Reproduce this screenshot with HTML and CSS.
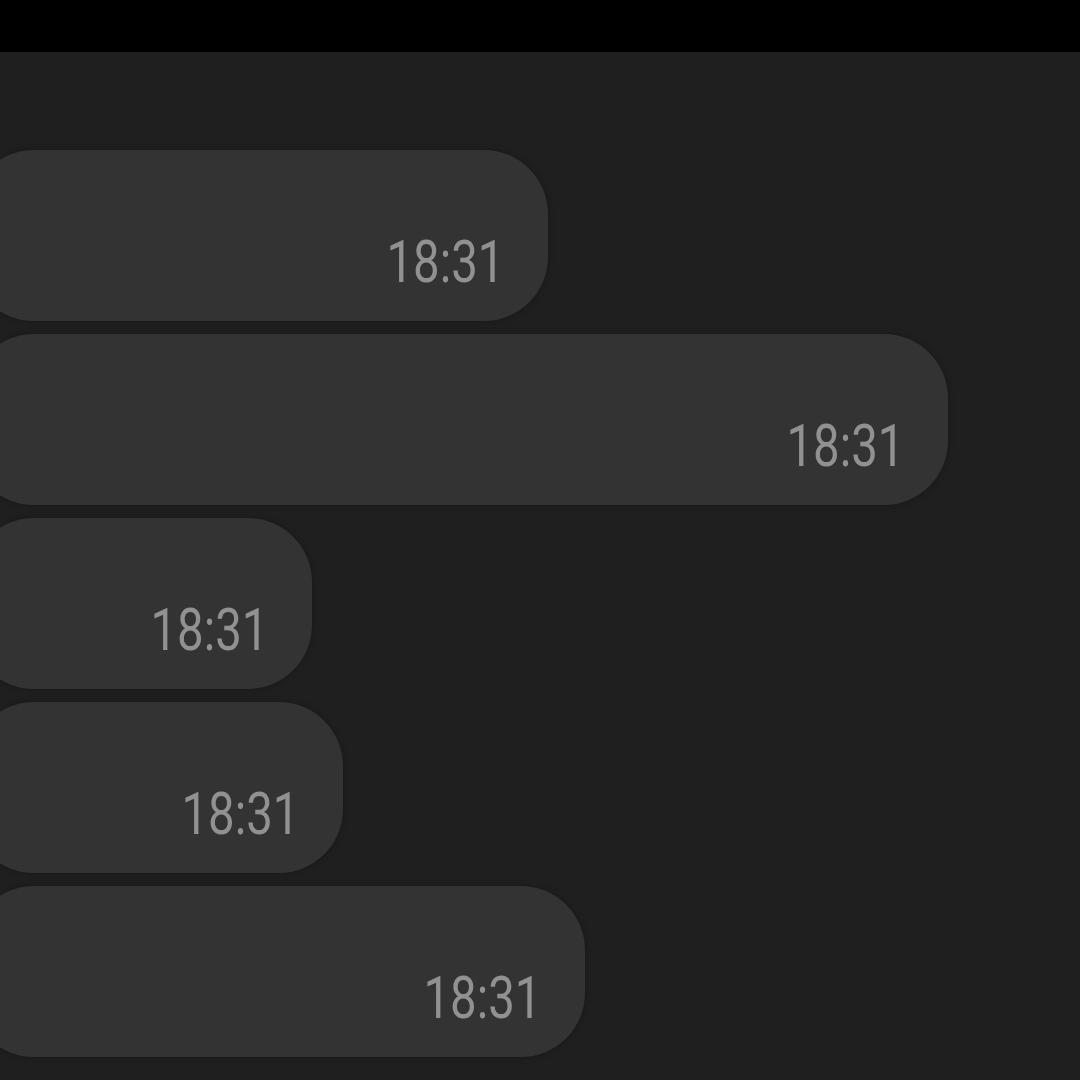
FILE: index.html
```html
<!DOCTYPE html>
<html>
<head>
<meta charset="utf-8">
<link rel="stylesheet" href="styles.css">
</head>
<body>
<div class="topbar"></div>
<div class="chat">
  <div class="bubble" style="width:578px"><span class="time">18:31</span></div>
  <div class="bubble" style="width:978px"><span class="time">18:31</span></div>
  <div class="bubble" style="width:342px"><span class="time">18:31</span></div>
  <div class="bubble" style="width:373px"><span class="time">18:31</span></div>
  <div class="bubble" style="width:615px"><span class="time">18:31</span></div>
</div>
</body>
</html>
```
FILE: styles.css
```css
html, body {
  margin: 0;
  padding: 0;
  background: #1f1f1f;
  width: 1080px;
  height: 1080px;
  overflow: hidden;
}
.topbar {
  height: 52px;
  background: #000;
}
.chat {
  display: flex;
  flex-direction: column;
  gap: 13px;
  padding-top: 98px;
}
.bubble {
  box-sizing: border-box;
  height: 171px;
  margin-left: -30px;
  background: #333333;
  border-radius: 64px;
  display: flex;
  justify-content: flex-end;
  align-items: flex-end;
  padding: 0 44px 29px 0;
  box-shadow: 0 0 6px rgba(0,0,0,0.25);
}
.time {
  display: inline-block;
  font-family: Roboto, "Liberation Sans", sans-serif;
  font-size: 60px;
  line-height: 1;
  color: #919191;
  transform: scaleX(0.79);
  transform-origin: right bottom;
}
```
